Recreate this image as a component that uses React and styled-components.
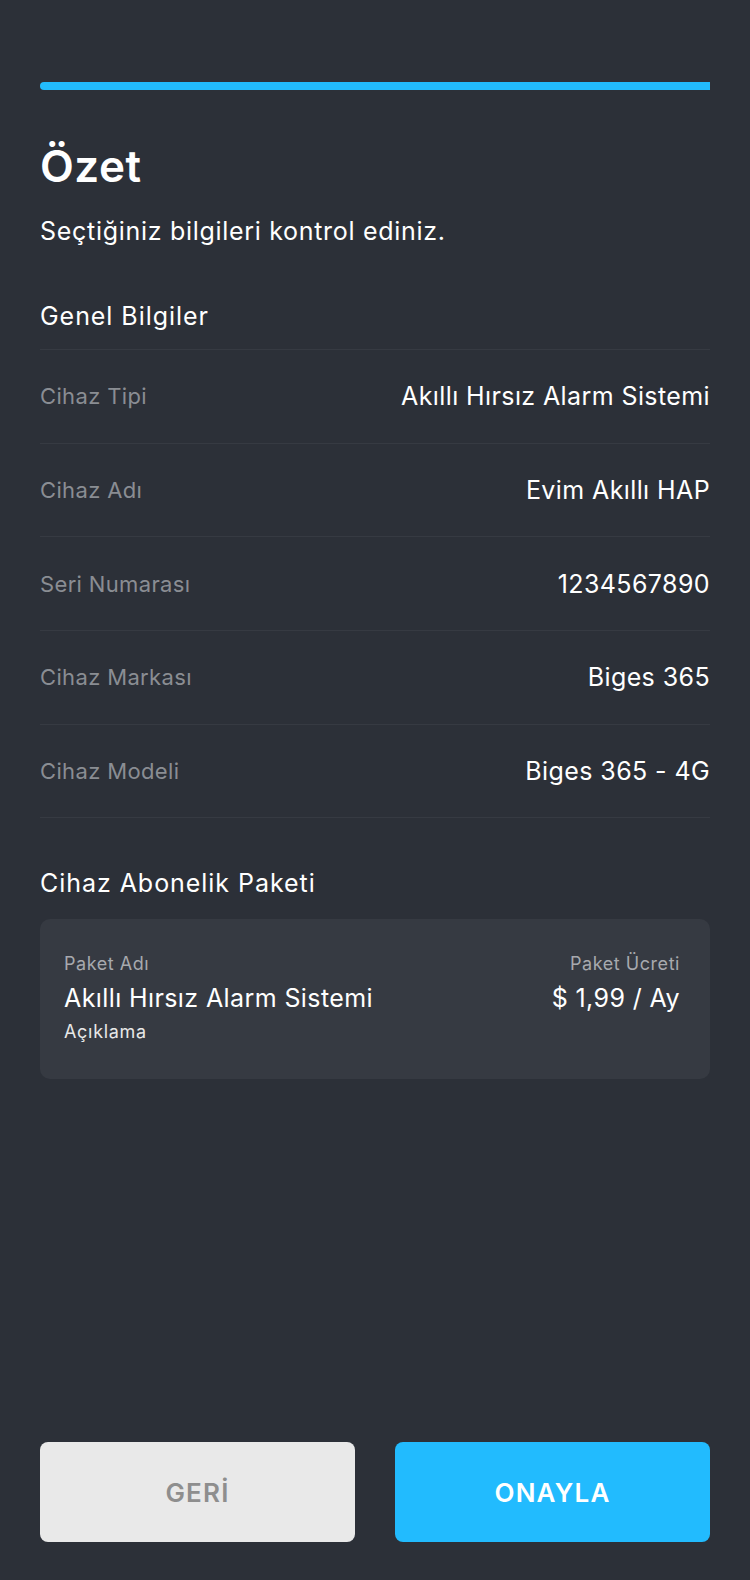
import React from 'react';
import styled, { createGlobalStyle } from 'styled-components';

const GlobalStyle = createGlobalStyle`
  html, body {
    margin: 0;
    padding: 0;
    background: #2c3038;
  }
  * {
    box-sizing: border-box;
  }
`;

const Page = styled.div`
  min-height: 1580px;
  display: flex;
  flex-direction: column;
  padding: 82px 40px 38px;
  background: #2c3038;
  font-family: Inter, "Noto Sans", sans-serif;
  color: #ffffff;
`;

const Progress = styled.div`
  height: 8px;
  background: #22bbfc;
  border-radius: 4px 0 0 4px;
`;

const Title = styled.h1`
  margin: 50px 0 0;
  font-size: 44px;
  line-height: 52px;
  font-weight: 600;
  letter-spacing: 0.5px;
`;

const Subtitle = styled.p`
  margin: 23px 0 0;
  font-size: 25px;
  line-height: 32px;
  font-weight: 400;
  letter-spacing: 0.7px;
`;

const SectionTitle = styled.h2`
  margin: ${(p) => p.$top}px 0 0;
  font-size: 25px;
  line-height: 32px;
  font-weight: 400;
  letter-spacing: 0.95px;
`;

const List = styled.div`
  margin-top: 17px;
  border-top: 1px solid #363a42;
`;

const Row = styled.div`
  height: 93.7px;
  display: flex;
  align-items: center;
  justify-content: space-between;
  border-bottom: 1px solid #363a42;
`;

const Label = styled.span`
  font-size: 22px;
  color: #8a8d93;
  letter-spacing: 0.35px;
`;

const Value = styled.span`
  font-size: 25px;
  color: #ffffff;
  letter-spacing: 0.4px;
`;

const Card = styled.div`
  margin-top: 20px;
  height: 160px;
  padding: 33px 30px 0 24px;
  display: flex;
  justify-content: space-between;
  background: #363a42;
  border-radius: 10px;
`;

const Column = styled.div`
  display: flex;
  flex-direction: column;
  align-items: ${(p) => (p.$right ? 'flex-end' : 'flex-start')};
`;

const SmallLabel = styled.span`
  font-size: 18px;
  line-height: 24px;
  color: #a7a9ae;
  letter-spacing: 0.55px;
`;

const CardValue = styled.span`
  margin-top: 6px;
  font-size: 25px;
  line-height: 32px;
  color: #ffffff;
  letter-spacing: 0.4px;
`;

const Note = styled.span`
  margin-top: 6px;
  font-size: 18px;
  line-height: 24px;
  color: #e8e8e8;
  letter-spacing: 0.7px;
`;

const Actions = styled.div`
  margin-top: auto;
  display: grid;
  grid-template-columns: 1fr 1fr;
  gap: 40px;
`;

const Button = styled.button`
  height: 100px;
  border: none;
  border-radius: 8px;
  font-family: Inter, "Noto Sans", sans-serif;
  font-size: 26px;
  font-weight: 600;
  letter-spacing: 1.2px;
  background: ${(p) => (p.$primary ? '#22bbfe' : '#e9e9e9')};
  color: ${(p) => (p.$primary ? '#ffffff' : '#8e8e8e')};
  cursor: pointer;
`;

const rows = [
  ['Cihaz Tipi', 'Akıllı Hırsız Alarm Sistemi'],
  ['Cihaz Adı', 'Evim Akıllı HAP'],
  ['Seri Numarası', '1234567890'],
  ['Cihaz Markası', 'Biges 365'],
  ['Cihaz Modeli', 'Biges 365 - 4G'],
];

const App = () => {
  return (
    <>
      <GlobalStyle />
      <Page>
        <Progress />
        <Title>Özet</Title>
        <Subtitle>Seçtiğiniz bilgileri kontrol ediniz.</Subtitle>

        <SectionTitle $top={53}>Genel Bilgiler</SectionTitle>
        <List>
          {rows.map(([label, value]) => (
            <Row key={label}>
              <Label>{label}</Label>
              <Value>{value}</Value>
            </Row>
          ))}
        </List>

        <SectionTitle $top={49}>Cihaz Abonelik Paketi</SectionTitle>
        <Card>
          <Column>
            <SmallLabel>Paket Adı</SmallLabel>
            <CardValue>Akıllı Hırsız Alarm Sistemi</CardValue>
            <Note>Açıklama</Note>
          </Column>
          <Column $right>
            <SmallLabel>Paket Ücreti</SmallLabel>
            <CardValue>$ 1,99 / Ay</CardValue>
          </Column>
        </Card>

        <Actions>
          <Button>GERİ</Button>
          <Button $primary>ONAYLA</Button>
        </Actions>
      </Page>
    </>
  );
};

export default App;
